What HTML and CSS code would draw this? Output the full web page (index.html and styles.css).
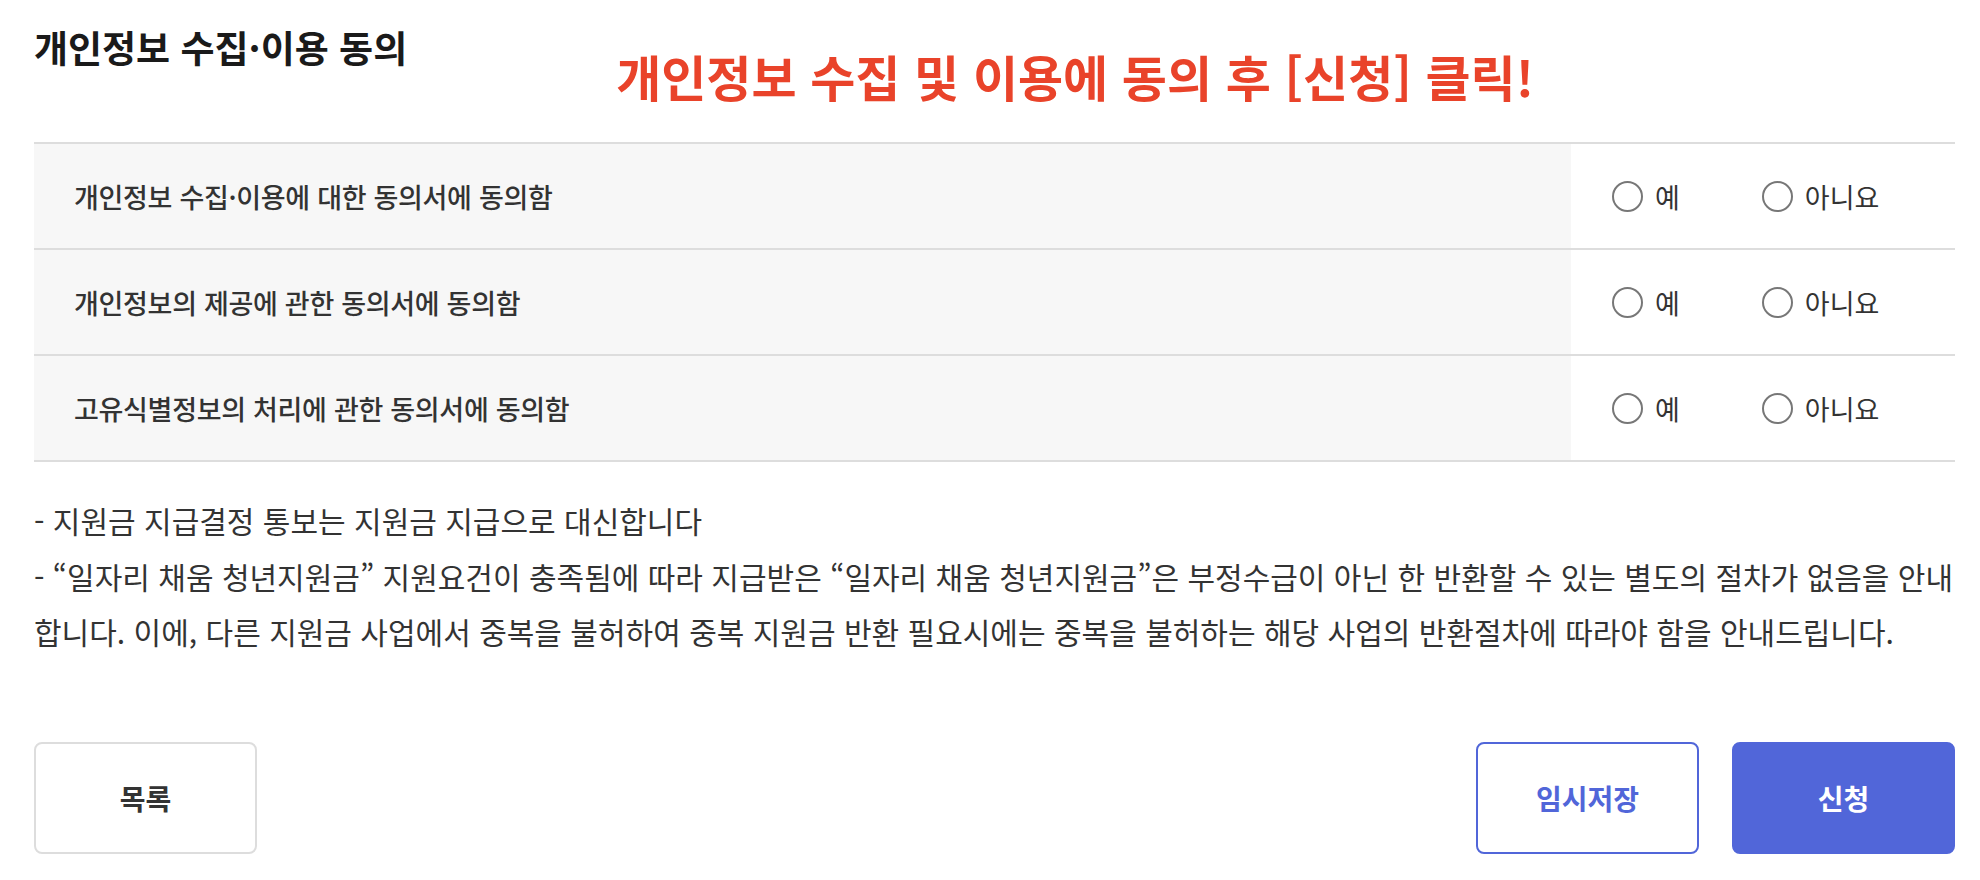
FILE: index.html
```html
<!DOCTYPE html>
<html lang="ko">

<head>
    <meta charset="UTF-8">
    <meta name="viewport" content="width=device-width, initial-scale=1.0">
    <title>개인정보 수집·이용 동의</title>
    <link rel="stylesheet" href="styles.css">
</head>

<body>
    <div class="wrap">

        <div class="head">
            <h2 class="title">개인정보 수집·이용 동의</h2>
            <p class="notice">개인정보 수집 및 이용에 동의 후 [신청] 클릭!</p>
        </div>

        <div class="agree_tbl">
            <div class="agree_row">
                <div class="agree_label">개인정보 수집·이용에 대한 동의서에 동의함</div>
                <div class="agree_opts">
                    <label class="opt"><input type="radio" name="agree1"> 예</label>
                    <label class="opt"><input type="radio" name="agree1"> 아니요</label>
                </div>
            </div>
            <div class="agree_row">
                <div class="agree_label">개인정보의 제공에 관한 동의서에 동의함</div>
                <div class="agree_opts">
                    <label class="opt"><input type="radio" name="agree2"> 예</label>
                    <label class="opt"><input type="radio" name="agree2"> 아니요</label>
                </div>
            </div>
            <div class="agree_row">
                <div class="agree_label">고유식별정보의 처리에 관한 동의서에 동의함</div>
                <div class="agree_opts">
                    <label class="opt"><input type="radio" name="agree3"> 예</label>
                    <label class="opt"><input type="radio" name="agree3"> 아니요</label>
                </div>
            </div>
        </div>

        <ul class="info">
            <li>- 지원금 지급결정 통보는 지원금 지급으로 대신합니다</li>
            <li>- “일자리 채움 청년지원금” 지원요건이 충족됨에 따라 지급받은 “일자리 채움 청년지원금”은 부정수급이 아닌 한 반환할 수 있는 별도의 절차가 없음을 안내합니다. 이에, 다른 지원금 사업에서 중복을 불허하여 중복 지원금 반환 필요시에는 중복을 불허하는 해당 사업의 반환절차에 따라야 함을 안내드립니다.</li>
        </ul>

        <div class="btns">
            <button class="btn btn_line">목록</button>
            <div class="btns_right">
                <button class="btn btn_blue_line">임시저장</button>
                <button class="btn btn_blue">신청</button>
            </div>
        </div>

    </div>
</body>

</html>
```

FILE: styles.css
```css
* {
    margin: 0;
    padding: 0;
    box-sizing: border-box;
    font-family: "Noto Sans CJK KR", "Noto Sans", sans-serif;
}

body {
    background-color: #fff;
    color: #333;
}

.wrap {
    width: 1921px;
    margin-left: 34px;
}

/* title */
.head {
    display: flex;
    align-items: flex-start;
    height: 142px;
}

.title {
    font-size: 37px;
    font-weight: 700;
    color: #1a1a1a;
    line-height: 1;
    padding-top: 29px;
}

.notice {
    margin-left: 209px;
    padding-top: 51px;
    font-size: 49px;
    font-weight: 700;
    color: #e9432a;
    line-height: 1;
}

/* agree table */
.agree_tbl {
    border-top: 2px solid #ddd;
}

.agree_row {
    display: flex;
    height: 106px;
    border-bottom: 2px solid #ddd;
}

.agree_label {
    flex: 1;
    display: flex;
    align-items: center;
    padding-left: 40px;
    background-color: #f7f7f7;
    font-size: 27px;
    font-weight: 500;
    letter-spacing: -0.3px;
    color: #333;
}

.agree_opts {
    width: 384px;
    display: flex;
    align-items: center;
    padding-left: 41px;
    gap: 82px;
}

.opt {
    display: flex;
    align-items: center;
    gap: 12px;
    font-size: 27px;
    color: #333;
    cursor: pointer;
}

.opt input[type="radio"] {
    appearance: none;
    width: 31px;
    height: 31px;
    border: 2px solid #777;
    border-radius: 50%;
    background: #fff;
    margin: 0;
}

/* notes */
.info {
    list-style: none;
    padding-top: 31px;
}

.info li {
    font-size: 30px;
    line-height: 55.5px;
    color: #333;
}

/* buttons */
.btns {
    display: flex;
    justify-content: space-between;
    margin-top: 82px;
}

.btns_right {
    display: flex;
    gap: 33px;
}

.btn {
    width: 223px;
    height: 112px;
    border-radius: 8px;
    font-size: 28px;
    font-weight: 700;
    cursor: pointer;
}

.btn_line {
    background-color: #fff;
    border: 2px solid #ddd;
    color: #333;
}

.btn_blue_line {
    background-color: #fff;
    border: 2px solid #5166d9;
    color: #5166d9;
}

.btn_blue {
    background-color: #5166d9;
    border: 2px solid #5166d9;
    color: #fff;
}
```
